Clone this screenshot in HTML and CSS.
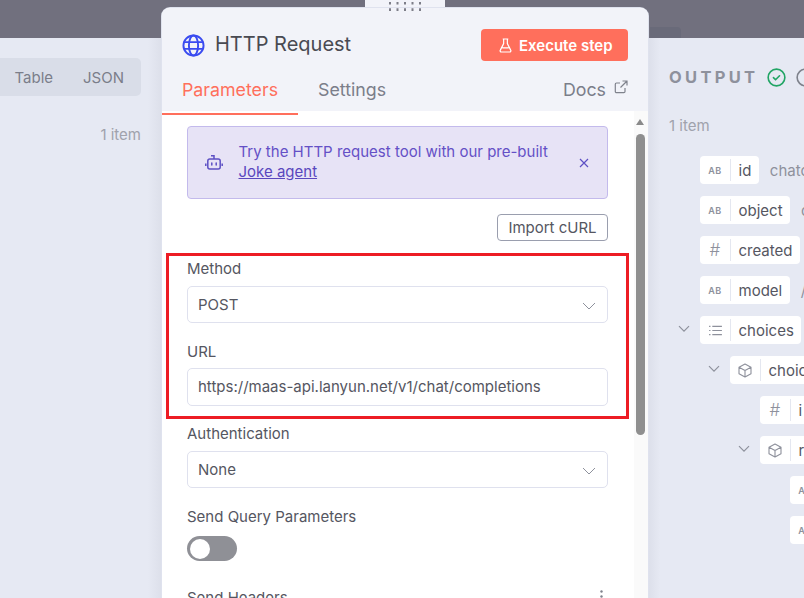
FILE: index.html
```html
<!DOCTYPE html>
<html lang="en">
<head>
<meta charset="utf-8">
<title>HTTP Request</title>
<link rel="stylesheet" href="styles.css">
</head>
<body>
<div class="page">
  <div class="topbar"><div class="topbar-notch"></div></div>
  <div class="panes">
    <section class="input-pane">
      <div class="view-switch"><span>Table</span><span>JSON</span></div>
      <div class="input-count">1 item</div>
    </section>
    <section class="output-pane">
      <div class="output-head">
        <span class="output-title">OUTPUT</span>
        <svg class="ok-icon" viewBox="0 0 20 20" fill="none"><circle cx="10" cy="10" r="8.800" stroke="#22a565" stroke-width="1.700"/><path d="M6.800 10.200l2.200 2.200 4.200-4.200" stroke="#22a565" stroke-width="1.700" stroke-linecap="round" stroke-linejoin="round"/></svg>
        <svg class="info-icon" viewBox="0 0 20 20" fill="none"><circle cx="10" cy="10" r="8.800" stroke="#7f828c" stroke-width="1.700"/></svg>
      </div>
      <div class="output-count">1 item</div>
      <div class="tree">
        <div class="row d0"><span class="chip"><span class="type ab">AB</span><span class="name">id</span></span><span class="val">chatc</span></div>
        <div class="row d0"><span class="chip"><span class="type ab">AB</span><span class="name">object</span></span><span class="val">c</span></div>
        <div class="row d0"><span class="chip"><span class="type hash">#</span><span class="name">created</span></span></div>
        <div class="row d0"><span class="chip"><span class="type ab">AB</span><span class="name">model</span></span><span class="val">/</span></div>
        <div class="row d0">
          <svg class="chev" viewBox="0 0 12 8" fill="none"><path d="M1 1.200l5 5 5-5" stroke="#8e919c" stroke-width="1.200"/></svg>
          <span class="chip"><span class="type"><svg class="list-i" viewBox="0 0 14 12" fill="none" stroke="#8e919c"><path d="M0 1.500h1.500M0 6h1.500M0 10.500h1.500M3.500 1.500H14M3.500 6H14M3.500 10.500H14" stroke-width="1.100"/></svg></span><span class="name">choices</span></span>
        </div>
        <div class="row d1">
          <svg class="chev" viewBox="0 0 12 8" fill="none"><path d="M1 1.200l5 5 5-5" stroke="#8e919c" stroke-width="1.200"/></svg>
          <span class="chip"><span class="type"><svg class="cube-i" viewBox="0 0 14 15" fill="none" stroke="#8e919c" stroke-width="1.100" stroke-linejoin="round"><path d="M7 1l6 3.200v6.600L7 14l-6-3.200V4.200zM1 4.200L7 7.500l6-3.300M7 7.500V14"/></svg></span><span class="name">choic</span></span>
        </div>
        <div class="row d2"><span class="chip"><span class="type hash">#</span><span class="name">i</span></span></div>
        <div class="row d2">
          <svg class="chev" viewBox="0 0 12 8" fill="none"><path d="M1 1.200l5 5 5-5" stroke="#8e919c" stroke-width="1.200"/></svg>
          <span class="chip"><span class="type"><svg class="cube-i" viewBox="0 0 14 15" fill="none" stroke="#8e919c" stroke-width="1.100" stroke-linejoin="round"><path d="M7 1l6 3.200v6.600L7 14l-6-3.200V4.200zM1 4.200L7 7.500l6-3.300M7 7.500V14"/></svg></span><span class="name">r</span></span>
        </div>
        <div class="row d3"><span class="chip"><span class="type ab">AB</span></span></div>
        <div class="row d3"><span class="chip"><span class="type ab">AB</span></span></div>
      </div>
    </section>
  </div>

  <div class="handle-tab"></div>

  <div class="modal">
    <header class="modal-head">
      <div class="title-row">
        <svg class="globe" viewBox="0 0 24 24" fill="none" stroke="#3a4bf0" stroke-width="2"><circle cx="12" cy="12" r="10.500"/><ellipse cx="12" cy="12" rx="4.800" ry="10.500"/><path d="M2 8.500h20M2 15.500h20"/></svg>
        <h1 class="title">HTTP Request</h1>
        <button class="exec">
          <svg class="flask" viewBox="0 0 14 16" fill="none" stroke="#fff" stroke-width="1.300" stroke-linejoin="round"><path d="M4 1h6M5 1v5L1.400 13a1.300 1.300 0 0 0 1.200 2h8.800a1.300 1.300 0 0 0 1.200-2L9 6V1M3.500 10.500h7"/></svg>
          Execute step
        </button>
      </div>
      <nav class="tabs">
        <span class="tab active">Parameters</span>
        <span class="tab">Settings</span>
        <span class="docs">Docs
          <svg class="ext" viewBox="0 0 14 14" fill="none" stroke="#7f828c" stroke-width="1.200"><path d="M11 8v3.500a1.200 1.200 0 0 1-1.200 1.200H2.500a1.200 1.200 0 0 1-1.200-1.200V4.200A1.200 1.200 0 0 1 2.500 3H6M8.500 1h4.500v4.500M13 1L6.500 7.500"/></svg>
        </span>
      </nav>
    </header>
    <div class="modal-body">
      <div class="form">
        <div class="banner">
          <svg class="bot" viewBox="0 0 18 18" fill="none" stroke="#5d50c4" stroke-width="1.500"><rect x="2.800" y="5" width="12.400" height="10" rx="2"/><path d="M9 5V1.800H6M.8 9.500v2.500M17.200 9.500v2.500"/><path d="M6.800 9v2M11.200 9v2" stroke-linecap="round"/></svg>
          <p class="banner-text">Try the HTTP request tool with our pre-built <a class="banner-link">Joke agent</a></p>
          <svg class="close" viewBox="0 0 10 10" fill="none" stroke="#5d50c4" stroke-width="1.200"><path d="M1 1l8 8M9 1l-8 8"/></svg>
        </div>
        <div class="import-row"><button class="import">Import cURL</button></div>
        <label class="label first">Method</label>
        <div class="field select">POST
          <svg class="caret" viewBox="0 0 14 8" fill="none" stroke="#8e919c" stroke-width="1"><path d="M1 1l6 6 6-6"/></svg>
        </div>
        <label class="label url">URL</label>
        <div class="field text"><span class="url-value">https://maas-api.lanyun.net/v1/chat/completions</span></div>
        <label class="label auth">Authentication</label>
        <div class="field select">None
          <svg class="caret" viewBox="0 0 14 8" fill="none" stroke="#8e919c" stroke-width="1"><path d="M1 1l6 6 6-6"/></svg>
        </div>
        <label class="label query">Send Query Parameters</label>
        <div class="toggle"><span class="knob"></span></div>
        <div class="headers-row">
          <label class="label">Send Headers</label>
          <svg class="dots" viewBox="0 0 3 14" fill="#7f828c"><circle cx="1.500" cy="1.500" r="1.200"/><circle cx="1.500" cy="6.500" r="1.200"/><circle cx="1.500" cy="11.500" r="1.200"/></svg>
        </div>
      </div>
      <div class="scrollbar">
        <span class="arrow"></span>
        <span class="thumb"></span>
      </div>
    </div>
  </div>

  <div class="grip">
    <svg viewBox="0 0 32 9" fill="#7d7e88"><path d="M0 0h2v2.400H0zM7.500 0h2v2.400h-2zM15 0h2v2.400h-2zM22.500 0h2v2.400h-2zM30 0h2v2.400h-2zM0 6.300h2v2.700H0zM7.500 6.300h2v2.700h-2zM15 6.300h2v2.700h-2zM22.500 6.300h2v2.700h-2zM30 6.300h2v2.700h-2z"/></svg>
  </div>

  <div class="highlight"></div>
</div>
</body>
</html>
```

FILE: styles.css
```css
* { box-sizing: border-box; }
html, body { margin: 0; padding: 0; }
body {
  font-family: Inter, "Liberation Sans", sans-serif;
  color: #555661;
  background: #e6e9f3;
}
.page {
  position: relative;
  width: 804px;
  height: 598px;
  overflow: hidden;
  background: #e6e9f3;
}
.topbar {
  position: relative;
  height: 38px;
  background: #71707e;
}
.topbar-notch {
  position: absolute;
  left: 650px;
  top: 27px;
  width: 31px;
  height: 11px;
  background: #696a79;
  border-radius: 0 4px 0 0;
}
.panes {
  display: flex;
  height: 560px;
}
.input-pane {
  width: 162px;
  display: flex;
  flex-direction: column;
  align-items: flex-end;
  padding: 20px 21px 0 0;
  background: linear-gradient(to right, #e6e9f3 148px, #dcdfea 162px);
}
.view-switch {
  width: 141px;
  height: 38px;
  display: flex;
  align-items: center;
  justify-content: flex-end;
  gap: 30px;
  padding-right: 17px;
  font-size: 15px;
  color: #7b7e8a;
  background: #d9dde8;
  border-radius: 0 5px 5px 0;
}
.input-count {
  margin-top: 29px;
  font-size: 15px;
  color: #a0a2ac;
}
.output-pane {
  margin-left: 486px;
  width: 156px;
  padding: 0 0 0 21px;
  background: linear-gradient(to right, #dcdfea 0, #e6e9f3 12px);
}
.output-head {
  display: flex;
  align-items: center;
  height: 22px;
  margin-top: 28px;
  white-space: nowrap;
}
.output-title {
  font-size: 16.500px;
  font-weight: 700;
  letter-spacing: 3.300px;
  color: #8e919c;
}
.ok-icon, .info-icon {
  width: 19px;
  height: 19px;
  flex: none;
}
.ok-icon { margin-left: 9px; }
.info-icon { margin-left: 10px; }
.output-count {
  margin-top: 29px;
  font-size: 15px;
  line-height: 18px;
  color: #a0a2ac;
}
.tree {
  margin-top: 21px;
  margin-left: -21px;
  width: 156px;
  overflow: hidden;
}
.row {
  position: relative;
  display: flex;
  align-items: center;
  height: 28px;
  margin-bottom: 12px;
  white-space: nowrap;
}
.d0 { padding-left: 52px; }
.d1 { padding-left: 82px; }
.d2 { padding-left: 112px; }
.d3 { padding-left: 142px; }
.chev {
  position: absolute;
  width: 12px;
  height: 8px;
  margin-left: -22px;
  margin-top: -2px;
}
.chip {
  display: inline-flex;
  align-items: center;
  flex: none;
  height: 28px;
  background: #fff;
  border-radius: 4px;
  font-size: 15px;
  color: #555661;
}
.type {
  display: flex;
  align-items: center;
  justify-content: center;
  width: 31px;
  height: 22px;
  flex: none;
  border-right: 1px solid #e4e7f0;
  color: #8e919c;
}
.type.ab { font-size: 9px; font-weight: 600; letter-spacing: 0.4px; }
.type.hash { font-size: 17px; font-weight: 300; }
.list-i { width: 13px; height: 11px; }
.cube-i { width: 14px; height: 15px; }
.name { padding: 0 7.500px; }
.val {
  margin-left: 11px;
  font-size: 15px;
  color: #8e919c;
}
.handle-tab {
  position: absolute;
  left: 365px;
  top: 0;
  width: 80px;
  height: 10px;
  background: #f2f3f9;
}
.grip {
  position: absolute;
  left: 389px;
  top: 2px;
  width: 32px;
  height: 9px;
  display: flex;
}
.grip svg { width: 32px; height: 9px; }
.modal {
  position: absolute;
  left: 162px;
  top: 8px;
  width: 486px;
  height: 600px;
  background: #fff;
  border-radius: 8px 8px 0 0;
  overflow: hidden;
  box-shadow: 0 0 0 1px #dfe2ee;
}
.modal-head {
  height: 103px;
  background: #f2f3f9;
}
.title-row {
  display: flex;
  align-items: center;
  padding: 21px 20px 0 20px;
  height: 53px;
}
.globe { width: 23px; height: 23px; flex: none; }
.title {
  margin: -2px 0 0 10px;
  font-size: 20px;
  font-weight: 400;
  color: #494a52;
  flex: 1;
  line-height: 32px;
}
.exec {
  display: flex;
  align-items: center;
  gap: 7px;
  width: 147px;
  height: 32px;
  padding: 0 0 0 18px;
  border: 0;
  border-radius: 4px;
  background: #ff6f5c;
  color: #fff;
  font: 600 15px Inter, "Liberation Sans", sans-serif;
}
.flask { width: 13px; height: 15px; flex: none; }
.tabs {
  display: flex;
  align-items: flex-start;
  height: 50px;
  font-size: 17.800px;
  color: #7b7e8a;
}
.tab {
  height: 38px;
  margin-top: 16px;
  line-height: 26px;
  padding: 0 20px;
}
.tab.active {
  color: #ff6f5c;
  border-bottom: 2px solid #ff6f5c;
}
.docs {
  margin-left: auto;
  margin-top: 16px;
  margin-right: 20px;
  line-height: 26px;
  display: flex;
  align-items: flex-start;
  gap: 8px;
}
.ext { width: 14px; height: 14px; margin-top: 3px; }
.modal-body {
  display: flex;
  height: 497px;
  overflow: hidden;
}
.form {
  width: 472px;
  padding: 15px 26px 0 25px;
  flex: none;
}
.banner {
  display: flex;
  align-items: center;
  height: 73px;
  padding: 0 18px 0 17px;
  background: #e7e3f6;
  border: 1px solid #c3baec;
  border-radius: 4px;
}
.bot { width: 18px; height: 18px; flex: none; }
.banner-text {
  margin: -2px 0 0 15.500px;
  flex: 1;
  font-size: 15px;
  line-height: 20px;
  color: #6450c6;
}
.banner-link { text-decoration: underline; color: #5a47be; display: block; }
.close { width: 10px; height: 10px; flex: none; }
.import-row {
  display: flex;
  justify-content: flex-end;
  margin-top: 15px;
}
.import {
  width: 111px;
  height: 27px;
  padding: 0;
  background: #fff;
  border: 1px solid #9a9eae;
  border-radius: 4px;
  font: 400 15px Inter, "Liberation Sans", sans-serif;
  color: #555661;
}
.label {
  display: block;
  font-size: 15px;
  line-height: 18px;
  color: #555661;
}
.label.first { margin-top: 19px; }
.label.url { margin-top: 20px; }
.label.auth { margin-top: 19px; }
.label.query { margin-top: 20px; }
.field {
  position: relative;
  display: flex;
  align-items: center;
  width: 421px;
  margin-top: 8px;
  padding-left: 10px;
  background: #fff;
  border: 1px solid #dfe1ee;
  border-radius: 5px;
  font-size: 15px;
  color: #555661;
}
.select { height: 37px; }
.text { height: 38px; margin-top: 7px; padding-bottom: 2px; }
.url-value { display: block; }
.caret {
  position: absolute;
  right: 11px;
  top: 15px;
  width: 14px;
  height: 8px;
}
.toggle {
  width: 50px;
  height: 25px;
  margin-top: 10px;
  padding: 2.500px 3px;
  background: #8f9096;
  border-radius: 13px;
}
.knob {
  display: block;
  width: 20px;
  height: 20px;
  background: #fff;
  border-radius: 50%;
}
.headers-row {
  display: flex;
  justify-content: space-between;
  margin-top: 28px;
}
.dots { width: 3px; height: 14px; margin: 1px 5px 0 0; }
.scrollbar {
  position: relative;
  width: 14px;
  flex: none;
  background: #fafafa;
}
.arrow {
  position: absolute;
  left: 2px;
  top: 8px;
  width: 0;
  height: 0;
  border-left: 4.500px solid transparent;
  border-right: 4.500px solid transparent;
  border-bottom: 6px solid #8a8a8a;
}
.thumb {
  position: absolute;
  left: 2px;
  top: 23px;
  width: 9px;
  height: 301px;
  background: #8f8f8f;
  border-radius: 5px;
}
.highlight {
  position: absolute;
  left: 166px;
  top: 253px;
  width: 463px;
  height: 166px;
  border: 3px solid #ed1c24;
  pointer-events: none;
}
```
